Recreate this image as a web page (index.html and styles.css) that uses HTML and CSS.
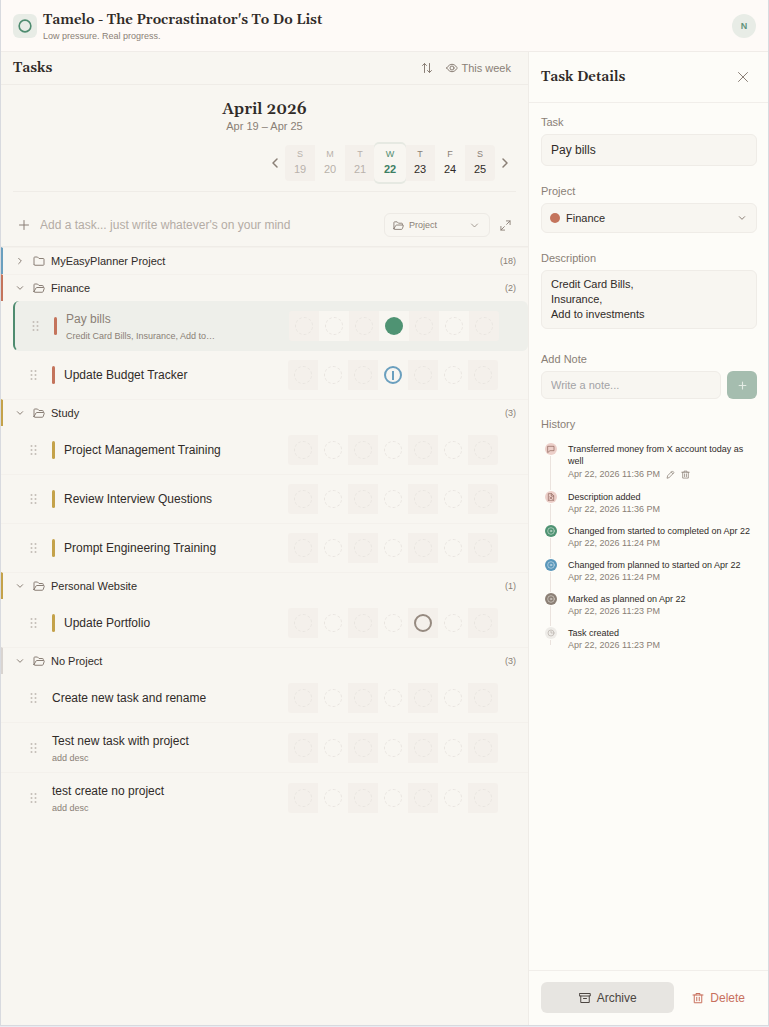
FILE: index.html
```html
<!DOCTYPE html>
<html lang="en">
<head>
    <meta charset="UTF-8">
    <meta name="viewport" content="width=device-width, initial-scale=1">
    <title>Tamelo - The Procrastinator's To Do List</title>
    <link rel="stylesheet" href="styles.css">
</head>
<body>

<!-- shared icons -->
<svg class="sprite" aria-hidden="true">
    <symbol id="i-right" viewBox="0 0 24 24"><path d="M8 4l8 8-8 8"/></symbol>
    <symbol id="i-left" viewBox="0 0 24 24"><path d="M16 4l-8 8 8 8"/></symbol>
    <symbol id="i-down" viewBox="0 0 24 24"><path d="M4 8l8 8 8-8"/></symbol>
    <symbol id="i-plus" viewBox="0 0 24 24"><path d="M12 3v18M3 12h18"/></symbol>
    <symbol id="i-close" viewBox="0 0 24 24"><path d="M3 3l18 18M21 3L3 21"/></symbol>
    <symbol id="i-sort" viewBox="0 0 24 24"><path d="M7 21V3M3 7l4-4 4 4M17 3v18M13 17l4 4 4-4"/></symbol>
    <symbol id="i-eye" viewBox="0 0 24 24"><path d="M1.500 12S5.500 4.500 12 4.500 22.500 12 22.500 12 18.500 19.500 12 19.500 1.500 12 1.500 12z"/><circle cx="12" cy="12" r="4"/></symbol>
    <symbol id="i-folder" viewBox="0 0 24 24"><path d="M2 18V5.500A1.500 1.500 0 0 1 3.500 4H9l3 3h8.500A1.500 1.500 0 0 1 22 8.500V19a1.500 1.500 0 0 1-1.500 1.500h-17A1.500 1.500 0 0 1 2 19z"/></symbol>
    <symbol id="i-open" viewBox="0 0 24 24"><path d="M2 19V5.500A1.500 1.500 0 0 1 3.500 4H9l3 3h7a1.500 1.500 0 0 1 1.500 1.500V11M2 19l4-7a2 2 0 0 1 1.700-1H21a1.500 1.500 0 0 1 1.400 2l-2 6a2 2 0 0 1-2 1.500H3.500A1.500 1.500 0 0 1 2 19z"/></symbol>
    <symbol id="i-expand" viewBox="0 0 24 24"><path d="M14 2h8v8M22 2l-7.500 7.500M10 22H2v-8M2 22l7.500-7.500"/></symbol>
    <symbol id="i-grip" viewBox="0 0 8 12"><g fill="currentColor" stroke="none"><circle cx="1.500" cy="2" r="1"/><circle cx="5.500" cy="2" r="1"/><circle cx="1.500" cy="6" r="1"/><circle cx="5.500" cy="6" r="1"/><circle cx="1.500" cy="10" r="1"/><circle cx="5.500" cy="10" r="1"/></g></symbol>
    <symbol id="i-archive" viewBox="0 0 24 24"><path d="M1.500 3h21v5h-21zM3.500 8v13h17V8M9 13h6"/></symbol>
    <symbol id="i-trash" viewBox="0 0 24 24"><path d="M2 6h20M8 6V3h8v3M4.500 6v15.500h15V6M9.500 10.500v7M14.500 10.500v7"/></symbol>
    <symbol id="i-pencil" viewBox="0 0 24 24"><path d="M3 21l1.500-6L17 2.500 21.500 7 9 19.500zM14 5.500l4.500 4.500"/></symbol>
    <symbol id="i-note" viewBox="0 0 24 24"><path d="M3 4h18v13H9l-6 5z"/></symbol>
    <symbol id="i-doc" viewBox="0 0 24 24"><path d="M4 22V2h10l6 6v14zM13 2v7h7M8 18l7-6M8 12l8 7"/></symbol>
    <symbol id="i-target" viewBox="0 0 24 24"><circle cx="12" cy="12" r="10"/><circle cx="12" cy="12" r="2.500"/></symbol>
    <symbol id="i-clock" viewBox="0 0 24 24"><circle cx="12" cy="12" r="9"/><path d="M12 7v5h4"/></symbol>
</svg>

<div class="app">
    <header class="topbar">
        <span class="logo"><svg viewBox="0 0 12 12"><circle cx="6" cy="6" r="5"/></svg></span>
        <div class="brand">
            <h1>Tamelo - The Procrastinator's To Do List</h1>
            <p>Low pressure. Real progress.</p>
        </div>
        <button class="avatar" type="button" aria-label="Account">N</button>
    </header>

    <div class="content">
        <main class="tasks">
            <div class="toolbar">
                <h2>Tasks</h2>
                <button class="tool" type="button" aria-label="Sort"><svg class="icon"><use href="#i-sort"/></svg></button>
                <button class="tool" type="button"><svg class="icon"><use href="#i-eye"/></svg>This week</button>
            </div>

            <section class="calendar">
                <h3>April 2026</h3>
                <p>Apr 19 – Apr 25</p>
                <div class="week">
                    <button class="nav" type="button" aria-label="Previous week"><svg class="icon"><use href="#i-left"/></svg></button>
                    <div class="days">
                        <div class="day past"><span>S</span><b>19</b></div>
                        <div class="day past"><span>M</span><b>20</b></div>
                        <div class="day past"><span>T</span><b>21</b></div>
                        <div class="day today"><span>W</span><b>22</b></div>
                        <div class="day"><span>T</span><b>23</b></div>
                        <div class="day"><span>F</span><b>24</b></div>
                        <div class="day"><span>S</span><b>25</b></div>
                    </div>
                    <button class="nav" type="button" aria-label="Next week"><svg class="icon"><use href="#i-right"/></svg></button>
                </div>
            </section>

            <form class="add-task">
                <svg class="icon"><use href="#i-plus"/></svg>
                <input type="text" aria-label="Add a task" placeholder="Add a task... just write whatever's on your mind">
                <div class="picker">
                    <svg class="icon"><use href="#i-open"/></svg>
                    <select aria-label="Project"><option>Project</option></select>
                    <svg class="icon arrow"><use href="#i-down"/></svg>
                </div>
                <button class="expand" type="button" aria-label="Expand"><svg class="icon"><use href="#i-expand"/></svg></button>
            </form>

            <section class="group blue">
                <button class="group-head" type="button" aria-expanded="false"><svg class="icon caret"><use href="#i-right"/></svg><svg class="icon"><use href="#i-folder"/></svg><span>MyEasyPlanner Project</span><em>(18)</em></button>
            </section>

            <section class="group red">
                <button class="group-head" type="button" aria-expanded="true"><svg class="icon caret"><use href="#i-down"/></svg><svg class="icon"><use href="#i-open"/></svg><span>Finance</span><em>(2)</em></button>
                <div class="task selected has-desc">
                    <svg class="grip"><use href="#i-grip"/></svg>
                    <i class="bar"></i>
                    <div class="text"><h4>Pay bills</h4><p>Credit Card Bills, Insurance, Add to…</p></div>
                    <div class="track" data-marks="...c..."></div>
                </div>
                <div class="task">
                    <svg class="grip"><use href="#i-grip"/></svg>
                    <i class="bar"></i>
                    <div class="text"><h4>Update Budget Tracker</h4></div>
                    <div class="track" data-marks="...s..."></div>
                </div>
            </section>

            <section class="group gold">
                <button class="group-head" type="button" aria-expanded="true"><svg class="icon caret"><use href="#i-down"/></svg><svg class="icon"><use href="#i-open"/></svg><span>Study</span><em>(3)</em></button>
                <div class="task">
                    <svg class="grip"><use href="#i-grip"/></svg>
                    <i class="bar"></i>
                    <div class="text"><h4>Project Management Training</h4></div>
                    <div class="track" data-marks="......."></div>
                </div>
                <div class="task">
                    <svg class="grip"><use href="#i-grip"/></svg>
                    <i class="bar"></i>
                    <div class="text"><h4>Review Interview Questions</h4></div>
                    <div class="track" data-marks="......."></div>
                </div>
                <div class="task">
                    <svg class="grip"><use href="#i-grip"/></svg>
                    <i class="bar"></i>
                    <div class="text"><h4>Prompt Engineering Training</h4></div>
                    <div class="track" data-marks="......."></div>
                </div>
            </section>

            <section class="group gold">
                <button class="group-head" type="button" aria-expanded="true"><svg class="icon caret"><use href="#i-down"/></svg><svg class="icon"><use href="#i-open"/></svg><span>Personal Website</span><em>(1)</em></button>
                <div class="task">
                    <svg class="grip"><use href="#i-grip"/></svg>
                    <i class="bar"></i>
                    <div class="text"><h4>Update Portfolio</h4></div>
                    <div class="track" data-marks="....p.."></div>
                </div>
            </section>

            <section class="group none">
                <button class="group-head" type="button" aria-expanded="true"><svg class="icon caret"><use href="#i-down"/></svg><svg class="icon"><use href="#i-open"/></svg><span>No Project</span><em>(3)</em></button>
                <div class="task">
                    <svg class="grip"><use href="#i-grip"/></svg>
                    <div class="text"><h4>Create new task and rename</h4></div>
                    <div class="track" data-marks="......."></div>
                </div>
                <div class="task has-desc">
                    <svg class="grip"><use href="#i-grip"/></svg>
                    <div class="text"><h4>Test new task with project</h4><p>add desc</p></div>
                    <div class="track" data-marks="......."></div>
                </div>
                <div class="task has-desc">
                    <svg class="grip"><use href="#i-grip"/></svg>
                    <div class="text"><h4>test create no project</h4><p>add desc</p></div>
                    <div class="track" data-marks="......."></div>
                </div>
            </section>
        </main>

        <aside class="details">
            <div class="details-head">
                <h2>Task Details</h2>
                <button class="close" type="button" aria-label="Close"><svg class="icon"><use href="#i-close"/></svg></button>
            </div>

            <div class="details-body">
                <div class="field">
                    <label for="task">Task</label>
                    <input id="task" class="control title" type="text" value="Pay bills">
                </div>
                <div class="field">
                    <label for="project">Project</label>
                    <div class="select-wrap">
                        <i class="dot"></i>
                        <select id="project" class="control"><option>Finance</option></select>
                        <svg class="icon arrow"><use href="#i-down"/></svg>
                    </div>
                </div>
                <div class="field">
                    <label for="desc">Description</label>
                    <textarea id="desc" class="control" rows="3">Credit Card Bills,
Insurance,
Add to investments</textarea>
                </div>
                <div class="field">
                    <label for="note">Add Note</label>
                    <div class="note-row">
                        <input id="note" class="control" type="text" placeholder="Write a note...">
                        <button type="button" aria-label="Save note"><svg class="icon"><use href="#i-plus"/></svg></button>
                    </div>
                </div>

                <h3>History</h3>
                <ol class="history">
                    <li>
                        <span class="mark rose"><svg class="icon"><use href="#i-note"/></svg></span>
                        <p>Transferred money from X account today as well</p>
                        <div class="stamp"><time>Apr 22, 2026 11:36 PM</time>
                            <button type="button" aria-label="Edit note"><svg class="icon"><use href="#i-pencil"/></svg></button>
                            <button type="button" aria-label="Delete note"><svg class="icon"><use href="#i-trash"/></svg></button>
                        </div>
                    </li>
                    <li>
                        <span class="mark rose"><svg class="icon"><use href="#i-doc"/></svg></span>
                        <p>Description added</p>
                        <time>Apr 22, 2026 11:36 PM</time>
                    </li>
                    <li>
                        <span class="mark green"><svg class="icon"><use href="#i-target"/></svg></span>
                        <p>Changed from started to completed on Apr 22</p>
                        <time>Apr 22, 2026 11:24 PM</time>
                    </li>
                    <li>
                        <span class="mark sky"><svg class="icon"><use href="#i-target"/></svg></span>
                        <p>Changed from planned to started on Apr 22</p>
                        <time>Apr 22, 2026 11:24 PM</time>
                    </li>
                    <li>
                        <span class="mark taupe"><svg class="icon"><use href="#i-target"/></svg></span>
                        <p>Marked as planned on Apr 22</p>
                        <time>Apr 22, 2026 11:23 PM</time>
                    </li>
                    <li>
                        <span class="mark pale"><svg class="icon"><use href="#i-clock"/></svg></span>
                        <p>Task created</p>
                        <time>Apr 22, 2026 11:23 PM</time>
                    </li>
                </ol>
            </div>

            <div class="details-foot">
                <button class="archive" type="button"><svg class="icon"><use href="#i-archive"/></svg>Archive</button>
                <button class="delete" type="button"><svg class="icon"><use href="#i-trash"/></svg>Delete</button>
            </div>
        </aside>
    </div>
</div>

<script>
    // c = completed, s = started, p = planned, . = empty
    var states = { c: 'completed', s: 'started', p: 'planned', '.': 'empty' };
    var names = ['Sun', 'Mon', 'Tue', 'Wed', 'Thu', 'Fri', 'Sat'];

    document.querySelectorAll('.track').forEach(function(track) {
        track.dataset.marks.split('').forEach(function(mark, i) {
            var cell = document.createElement('button');
            cell.type = 'button';
            cell.className = 'cell ' + states[mark];
            cell.setAttribute('aria-label', names[i] + ' ' + states[mark]);
            cell.appendChild(document.createElement('i'));
            track.appendChild(cell);
        });
    });
</script>

</body>
</html>
```
FILE: styles.css
```css
* { margin: 0; padding: 0; box-sizing: border-box; }
body {
    background: #e9ecf3;
    color: #302b28;
    font: 11px/16px "Liberation Sans", Arial, sans-serif;
}
button, input, select, textarea {
    font: inherit;
    color: inherit;
    border: 0;
    background: none;
    appearance: none;
    outline: none;
}
button { cursor: pointer; }
h1, h2, h3 {
    font-family: Gelasio, Georgia, "Liberation Serif", serif;
    font-weight: 600;
    font-size: 14px;
    line-height: 20px;
}
.sprite { display: none; }
.icon {
    display: block;
    flex: none;
    width: 12px;
    height: 12px;
    fill: none;
    stroke: currentColor;
    stroke-width: 2;
    stroke-linecap: round;
    stroke-linejoin: round;
}

.app {
    display: flex;
    flex-direction: column;
    min-height: calc(100vh - 1px);
    border: 1px solid #d8dadf;
    border-top: 0;
    background: #f8f6f1;
}
.topbar {
    display: flex;
    align-items: center;
    gap: 6px;
    padding: 10px 12px 9px;
    background: #fefaf7;
    border-bottom: 1px solid #f0ece8;
}
.logo {
    display: grid;
    place-items: center;
    width: 24px;
    height: 24px;
    border-radius: 6px;
    background: #e8ece6;
}
.logo svg {
    width: 14px;
    height: 14px;
    fill: none;
    stroke: #4f8c70;
    stroke-width: 1.4;
}
.brand { flex: 1; }
.brand p {
    font-size: 9px;
    line-height: 12px;
    color: #8a7f76;
}
.avatar {
    width: 24px;
    height: 24px;
    border-radius: 50%;
    background: #e8ece6;
    color: #5f927b;
    font-size: 9px;
    font-weight: 700;
}

.content {
    flex: 1;
    display: flex;
}
.tasks {
    flex: 1;
    min-width: 0;
}
.toolbar {
    display: flex;
    align-items: center;
    gap: 13px;
    padding: 6px 17px 6px 12px;
    border-bottom: 1px solid #efece7;
}
.toolbar h2 { flex: 1; }
.tool {
    display: flex;
    align-items: center;
    gap: 3px;
    color: #8a7f76;
}

.calendar {
    margin: 0 12px;
    padding: 14px 0 10px;
    text-align: center;
    border-bottom: 1px solid #efece7;
}
.calendar h3 { font-size: 16px; }
.calendar p {
    line-height: 14px;
    color: #8a7f76;
}
.week {
    display: flex;
    justify-content: flex-end;
    align-items: center;
    gap: 1px;
    margin-top: 12px;
    padding-right: 2px;
}
.nav {
    padding: 3px;
    color: #8a7f76;
}
.nav .icon { stroke-width: 3; }
.days { display: flex; }
.day {
    width: 30px;
    height: 36px;
    padding-top: 2px;
    color: #302b28;
}
.day span, .day b {
    display: block;
    font-size: 9px;
    line-height: 15px;
    font-weight: 400;
}
.day span { color: #8a7f76; }
.day b { font-size: 11px; }
.day:nth-child(odd) { background: #f4f0eb; }
.day:first-child { border-radius: 4px 0 0 4px; }
.day:last-child { border-radius: 0 4px 4px 0; }
.day.past, .day.past span { color: #b9b2ab; }
.day.today {
    z-index: 1;
    position: relative;
    border-radius: 4px;
    background: #f8f6f1;
    box-shadow: 0 0 0 1px #f8f6f1, 0 -2px 0 1px #e6e9e2, 0 2px 0 1px #e6e9e2;
}
.day.today span { color: #4f8c70; }
.day.today b { color: #3d7f63; font-weight: 700; }

.add-task {
    display: flex;
    align-items: center;
    padding: 21px 12px 9px;
    color: #8a7f76;
    border-bottom: 1px solid #efece7;
}
.add-task > .icon { margin: 0 10px 0 5px; }
.add-task > input {
    flex: 1;
    min-width: 0;
    font-size: 12px;
}
::placeholder { color: #b4aca5; opacity: 1; }
.picker {
    position: relative;
    width: 106px;
    color: #8a7f76;
}
.picker select {
    display: block;
    width: 100%;
    height: 24px;
    padding: 0 24px;
    border: 1px solid #edeae5;
    border-radius: 6px;
    font-size: 9px;
}
.picker .icon {
    position: absolute;
    left: 9px;
    top: 7px;
    width: 11px;
    height: 11px;
}
.picker .icon.arrow {
    left: auto;
    right: 11px;
    top: 8px;
    width: 9px;
    height: 9px;
}
.expand {
    margin-left: 5px;
    padding: 5px;
}
.expand .icon { width: 11px; height: 11px; }

.group { --tone: #d9d4d0; }
.blue { --tone: #6a9fbe; }
.red { --tone: #c4745c; }
.gold { --tone: #c4a24a; }
.group-head {
    display: flex;
    align-items: center;
    width: 100%;
    height: 27px;
    padding: 0 12px 1px 13px;
    border-left: 2px solid var(--tone);
    border-top: 1px solid #f4f1ec;
    text-align: left;
}
.group-head .icon { color: #8a7f76; }
.group-head .icon.caret {
    width: 8px;
    height: 8px;
    margin-right: 9px;
    stroke-width: 3;
}
.group-head span {
    flex: 1;
    margin-left: 6px;
}
.group-head em {
    font-style: normal;
    font-size: 9px;
    color: #8a7f76;
}
.task {
    display: flex;
    align-items: center;
    padding: 9px 30px 9px 29px;
    border-bottom: 1px solid #f4f1ec;
}
.task:last-child { border-bottom: 0; }
.task.has-desc { padding-top: 7px; padding-bottom: 7px; }
.task.selected {
    margin-left: 12px;
    padding-left: 17px;
    padding-right: 29px;
    border-left: 2px solid #4f8c70;
    border-bottom-color: #eeefea;
    border-radius: 6px;
    background: #eeefea;
}
.grip {
    flex: none;
    width: 8px;
    height: 12px;
    margin-right: 14px;
    color: #c3bdb7;
}
.bar {
    width: 3px;
    height: 18px;
    margin-right: 9px;
    border-radius: 2px;
    background: var(--tone);
}
.text {
    flex: 1;
    min-width: 0;
}
.has-desc .text { padding-top: 2px; }
.text h4 {
    font-size: 12px;
    line-height: 18px;
    font-weight: 400;
}
.text p {
    margin-top: 1px;
    font-size: 9px;
    line-height: 14px;
    color: #8a7f76;
}
.selected h4 { color: #8a7f76; }
.track {
    display: flex;
    flex: none;
}
.cell {
    display: grid;
    place-items: center;
    width: 30px;
    height: 30px;
    background: #f8f6f1;
}
.cell:nth-child(odd) { background: #f4f0eb; }
.cell:first-child { border-radius: 3px 0 0 3px; }
.cell:last-child { border-radius: 0 3px 3px 0; }
.cell i {
    display: grid;
    place-items: center;
    width: 18px;
    height: 18px;
    border: 1px dashed #e8e4df;
    border-radius: 50%;
}
.cell.completed i {
    border: 0;
    background: #4f9373;
}
.cell.started i { border: 2px solid #6a9fbe; }
.cell.started i::after {
    content: "";
    width: 2px;
    height: 9px;
    background: #6a9fbe;
}
.cell.planned i { border: 2px solid #968a80; }

.details {
    display: flex;
    flex-direction: column;
    flex: 0 0 240px;
    background: #fdfcf8;
    border-left: 1px solid #efece7;
}
.details-head {
    display: flex;
    align-items: center;
    justify-content: space-between;
    padding: 15px 12px;
    border-bottom: 1px solid #f1eeea;
}
.close {
    padding: 4px 7px;
    color: #8a7f76;
}
.details-body {
    flex: 1;
    padding: 11px 11px 11px 12px;
}
.field { margin-bottom: 17px; }
label {
    display: block;
    margin-bottom: 4px;
    color: #8a7f76;
}
.control {
    display: block;
    width: 100%;
    height: 28px;
    padding: 0 9px;
    border: 1px solid #efece7;
    border-radius: 6px;
    background: #f8f6f1;
}
.control.title {
    height: 32px;
    font-size: 12px;
}
textarea.control {
    height: 59px;
    margin-bottom: 22px;
    padding: 6px 9px;
    line-height: 15px;
    resize: none;
}
.select-wrap { position: relative; }
select.control {
    height: 30px;
    padding-left: 24px;
}
.dot {
    position: absolute;
    left: 9px;
    top: 10px;
    width: 10px;
    height: 10px;
    border-radius: 50%;
    background: #c4745c;
}
.select-wrap .arrow {
    position: absolute;
    right: 11px;
    top: 11px;
    width: 8px;
    height: 8px;
    color: #8a7f76;
    stroke-width: 3;
}
.note-row {
    display: flex;
    gap: 6px;
}
.note-row .control::placeholder { color: #a3a3a6; }
.note-row button {
    display: grid;
    place-items: center;
    flex: none;
    width: 30px;
    border-radius: 6px;
    background: #a5bdaf;
    color: #e3ebe4;
}
.note-row .icon { width: 9px; height: 9px; stroke-width: 3; }
.details-body h3 {
    margin-bottom: 11px;
    font: inherit;
    color: #8a7f76;
}
.history {
    list-style: none;
    font-size: 9px;
    line-height: 12px;
}
.history li {
    position: relative;
    padding: 0 0 10px 27px;
}
/* line that joins the marks */
.history li::before {
    content: "";
    position: absolute;
    left: 9px;
    top: 13px;
    bottom: 1px;
    width: 1px;
    background: #ebe3de;
}
.history li:last-child::before { bottom: 16px; }
.history time {
    display: block;
    color: #8a7f76;
}
.mark {
    position: absolute;
    left: 4px;
    top: 0;
    display: grid;
    place-items: center;
    width: 12px;
    height: 12px;
    border-radius: 50%;
}
.mark .icon { width: 8px; height: 8px; }
.rose { background: #eccfc9; color: #8d6058; }
.green { background: #4f9373; color: #cfe3d7; }
.sky { background: #5a97ba; color: #cfe1ec; }
.taupe { background: #8c8076; color: #ddd6d0; }
.pale { background: #eeece8; color: #b5aea7; }
.stamp {
    display: flex;
    align-items: center;
    gap: 6px;
    height: 14px;
    color: #8a7f76;
}
.stamp .icon { width: 9px; height: 9px; }

.details-foot {
    display: flex;
    gap: 6px;
    padding: 11px 11px 12px 12px;
    border-top: 1px solid #f1eeea;
}
.details-foot button {
    display: flex;
    align-items: center;
    justify-content: center;
    gap: 6px;
    height: 31px;
    font-size: 12px;
    border-radius: 6px;
}
.archive {
    flex: 1;
    background: #e7e5e1;
    color: #4c4641;
}
.delete {
    padding: 0 12px;
    color: #c8705e;
}
```
